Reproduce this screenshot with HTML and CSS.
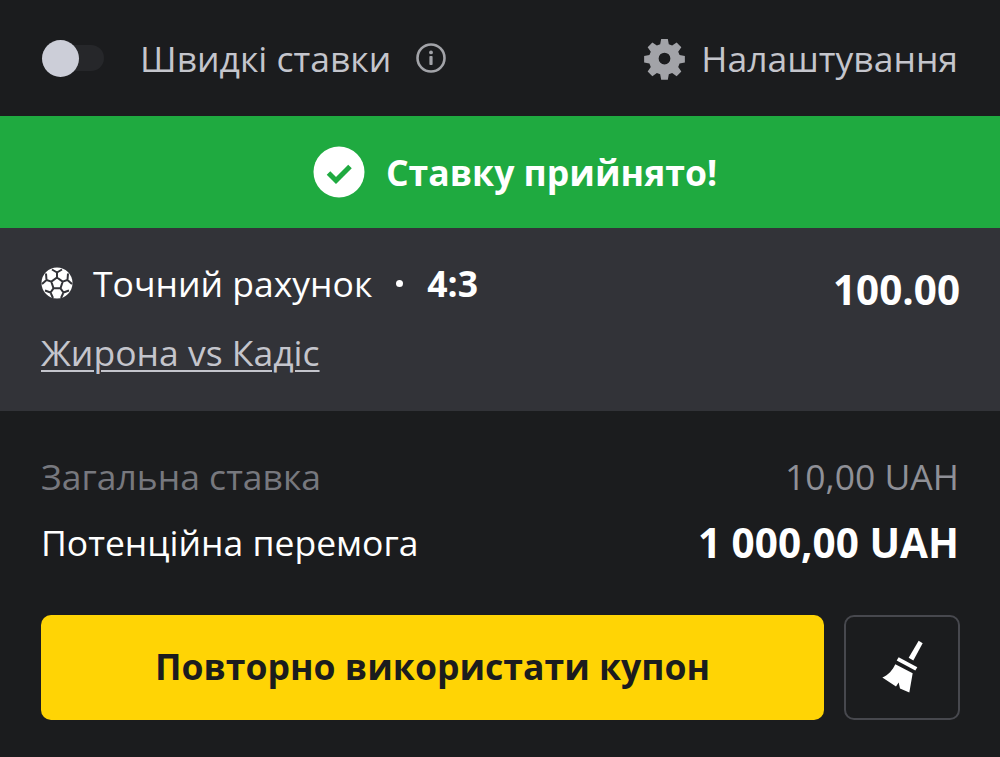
FILE: index.html
```html
<!DOCTYPE html>
<html lang="uk">

<head>
    <meta charset="UTF-8" />
    <meta name="viewport" content="width=device-width, initial-scale=1.0" />
    <title>Купон</title>
    <link rel="stylesheet" href="styles.css">
</head>

<body>
    <div class="topbar">
        <div class="quick">
            <div class="toggle"><span class="knob"></span></div>
            <span class="quick-label">Швидкі ставки</span>
            <svg class="info-icon" viewBox="0 0 32 32" width="32" height="32">
                <circle cx="16" cy="16" r="13.5" fill="none" stroke="#a2a3a8" stroke-width="2.6" />
                <rect x="14.4" y="14" width="3.2" height="9" rx="0.8" fill="#a2a3a8" />
                <circle cx="16" cy="10.4" r="1.9" fill="#a2a3a8" />
            </svg>
        </div>
        <div class="settings">
            <svg class="gear-icon" viewBox="0 0 24 24" width="47" height="47">
                <path fill="#a2a3a8" fill-rule="evenodd" d="M10.3 2h3.4l.5 2.7 1.7.7 2.3-1.6 2.4 2.4-1.6 2.3.7 1.7 2.7.5v3.4l-2.7.5-.7 1.7 1.6 2.3-2.4 2.4-2.3-1.6-1.7.7-.5 2.7h-3.4l-.5-2.7-1.7-.7-2.3 1.6-2.4-2.4 1.6-2.3-.7-1.7-2.7-.5v-3.4l2.7-.5.7-1.7-1.6-2.3 2.4-2.4 2.3 1.6 1.7-.7zM12 9a3 3 0 1 0 0 6 3 3 0 0 0 0-6z" />
            </svg>
            <span class="settings-label">Налаштування</span>
        </div>
    </div>

    <div class="accepted">
        <svg class="check-icon" viewBox="0 0 52 52" width="52" height="52">
            <circle cx="26" cy="26" r="25.5" fill="#fff" />
            <path d="M15.5 27l7.5 7.5 14-14" fill="none" stroke="#1faa40" stroke-width="5" />
        </svg>
        <span>Ставку прийнято!</span>
    </div>

    <div class="bet">
        <div class="bet-info">
            <div class="market">
                <svg class="ball-icon" viewBox="0 0 32 32" width="32" height="32">
                    <circle cx="16" cy="16" r="15.500" fill="#fff" />
                    <path fill="none" stroke="#323338" stroke-width="2" d="M16 10.500l5.700 4.100-2.200 6.700h-7l-2.200-6.700zM16 10.500v-5l-5-3M16 5.500l5-3M21.700 14.600l4.800-1.600.500-6.500M26.500 13l4.500 4M10.300 14.600L5.500 13 5 6.500M5.500 13L1 17M19.500 21.300l3 4.200 5.500-2M22.500 25.500L20 31M12.500 21.300l-3 4.200-5.500-2M9.500 25.500L12 31" />
                </svg>
                <span class="market-name">Точний рахунок</span>
                <span class="dot"></span>
                <span class="score">4:3</span>
            </div>
            <a class="match">Жирона vs Кадіс</a>
        </div>
        <div class="odds">100.00</div>
    </div>

    <div class="totals">
        <div class="total-row muted">
            <span>Загальна ставка</span>
            <span class="stake-amount">10,00 UAH</span>
        </div>
        <div class="total-row win">
            <span>Потенційна перемога</span>
            <span class="win-amount">1 000,00 UAH</span>
        </div>
    </div>

    <div class="actions">
        <button class="reuse">Повторно використати купон</button>
        <button class="clear">
            <svg class="broom-icon" viewBox="180 120 135 170" width="45" height="57">
                <path fill="#fff" d="M296 125l12 7-28 52-14-8z" />
                <path fill="#fff" d="M236 174l56 30-6 10-56-30z" />
                <path fill="#fff" d="M226 195l52 27-10 58-28-12-4-18-8 12-41-27c18-7 31-23 39-40z" />
            </svg>
        </button>
    </div>
</body>

</html>
```

FILE: styles.css
```css
:root {
    --background: #1b1c1e;
    --panel: #323338;
    --green: #1faa40;
    --yellow: #ffd405;
    --grey: #c4c5cc;
}

* {
    box-sizing: border-box;
}

body {
    margin: 0;
    font-family: 'Open Sans', 'Noto Sans', sans-serif;
    font-size: 35.5px;
    background: var(--background);
    color: white;
}

.topbar {
    height: 116px;
    padding: 0 42px;
    display: flex;
    align-items: center;
    justify-content: space-between;
}

.quick,
.settings {
    display: flex;
    align-items: center;
}

.toggle {
    width: 62px;
    height: 26px;
    background: #26272a;
    border-radius: 13px;
    display: flex;
    align-items: center;
}

.knob {
    width: 37px;
    height: 37px;
    border-radius: 50%;
    background: #ccced8;
}

.quick-label {
    margin-left: 36px;
    color: var(--grey);
}

.info-icon {
    margin-left: 24px;
}

.settings-label {
    margin-left: 13px;
    color: var(--grey);
}

.accepted {
    height: 112px;
    padding-left: 30px;
    background: var(--green);
    display: flex;
    align-items: center;
    justify-content: center;
    gap: 21px;
    font-size: 35.6px;
    font-weight: 700;
}

.bet {
    height: 183px;
    background: var(--panel);
    padding: 29px 40px 0 41px;
    display: flex;
    justify-content: space-between;
    align-items: flex-start;
}

.market {
    display: flex;
    align-items: center;
    height: 52px;
}

.market-name {
    margin-left: 20px;
}

.dot {
    width: 7px;
    height: 7px;
    margin: 0 24px;
    border-radius: 50%;
    background: white;
}

.score {
    font-weight: 700;
}

.match {
    display: block;
    margin-top: 19px;
    color: var(--grey);
    text-decoration: underline;
    text-decoration-thickness: 2px;
    text-underline-offset: 4px;
}

.odds {
    margin-top: 5px;
    font-size: 40.4px;
    font-weight: 700;
}

.totals {
    padding: 40px 41px 0;
}

.total-row {
    display: flex;
    justify-content: space-between;
    align-items: center;
    height: 50px;
}

.muted {
    color: #77787e;
}

.stake-amount {
    color: #8f9097;
}

.win {
    margin-top: 16px;
    color: white;
}

.win-amount {
    font-size: 40.5px;
    font-weight: 700;
}

.actions {
    margin-top: 48px;
    padding: 0 40px 0 41px;
    display: flex;
    gap: 20px;
}

.reuse {
    flex: 1;
    height: 105px;
    padding: 0 0 3px;
    border: none;
    border-radius: 10px;
    background: var(--yellow);
    color: #1b1c1e;
    font-family: inherit;
    font-size: 35.6px;
    font-weight: 700;
}

.clear {
    width: 116px;
    height: 105px;
    padding: 0;
    border: 2px solid #47484e;
    border-radius: 10px;
    background: transparent;
    display: flex;
    align-items: center;
    justify-content: center;
}
```
